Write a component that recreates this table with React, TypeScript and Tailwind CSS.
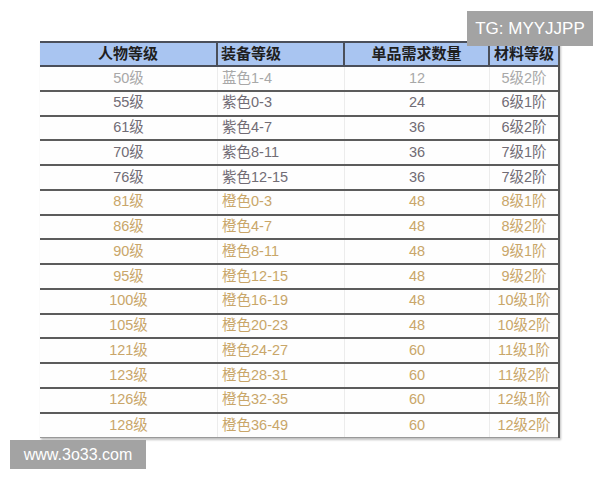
const rows: [string, string, string, string, string][] = [
  ['50级', '蓝色1-4', '12', '5级2阶', 'text-[#a8a8a8]'],
  ['55级', '紫色0-3', '24', '6级1阶', 'text-[#716c75]'],
  ['61级', '紫色4-7', '36', '6级2阶', 'text-[#716c75]'],
  ['70级', '紫色8-11', '36', '7级1阶', 'text-[#716c75]'],
  ['76级', '紫色12-15', '36', '7级2阶', 'text-[#716c75]'],
  ['81级', '橙色0-3', '48', '8级1阶', 'text-[#c9a669]'],
  ['86级', '橙色4-7', '48', '8级2阶', 'text-[#c9a669]'],
  ['90级', '橙色8-11', '48', '9级1阶', 'text-[#c9a669]'],
  ['95级', '橙色12-15', '48', '9级2阶', 'text-[#c9a669]'],
  ['100级', '橙色16-19', '48', '10级1阶', 'text-[#c9a669]'],
  ['105级', '橙色20-23', '48', '10级2阶', 'text-[#c9a669]'],
  ['121级', '橙色24-27', '60', '11级1阶', 'text-[#c9a669]'],
  ['123级', '橙色28-31', '60', '11级2阶', 'text-[#c9a669]'],
  ['126级', '橙色32-35', '60', '12级1阶', 'text-[#c9a669]'],
  ['128级', '橙色36-49', '60', '12级2阶', 'text-[#c9a669]'],
];

const cols = 'grid grid-cols-[178px_127px_145px_68px]';

export default function App() {
  return (
    <div className="relative w-[600px] h-[480px] bg-white overflow-hidden font-['Liberation_Sans','Noto_Sans_CJK_SC',sans-serif]">
      <div className="absolute top-[11px] left-[467px] w-[126px] h-[35px] bg-[#a3a3a3] text-white text-[17px] flex items-center justify-center">
        TG: MYYJJPP
      </div>

      <div className="pt-[41px] pl-[40px]">
        <div className="w-[520px] border-r-2 border-[#555] shadow-[1px_2px_2px_rgba(0,0,0,0.25)]">
          <div className={`${cols} h-[26px] bg-[#a9c5f1] border-t-2 border-b-2 border-[#4a4f5a] text-[15px] font-bold text-[#1f1f1f]`}>
            <div className="flex items-center justify-center border-r-2 border-[#4a4f5a]">人物等级</div>
            <div className="flex items-center pl-[3px] border-r-2 border-[#4a4f5a]">装备等级</div>
            <div className="flex items-center justify-center border-r-2 border-[#4a4f5a]">单品需求数量</div>
            <div className="flex items-center justify-center">材料等级</div>
          </div>
          {rows.map(([lv, eq, n, mat, color], i) => (
            <div
              key={lv}
              className={`${cols} h-[24.75px] text-[14.5px] ${color} ${i < rows.length - 1 ? 'border-b-2 border-[#5c5c5c]' : 'border-b border-[#999]'} bg-[#fefefe]`}
            >
              <div className="flex items-center justify-center border-r border-[#ececec]">{lv}</div>
              <div className="flex items-center pl-[4px] border-r border-[#ececec]">{eq}</div>
              <div className="flex items-center justify-center border-r border-[#ececec]">{n}</div>
              <div className="flex items-center justify-center">{mat}</div>
            </div>
          ))}
        </div>
      </div>

      <div className="absolute top-[440px] left-[10px] w-[136px] h-[29px] bg-[#a3a3a3] text-white text-[16px] flex items-center justify-center">
        www.3o33.com
      </div>
    </div>
  );
}
